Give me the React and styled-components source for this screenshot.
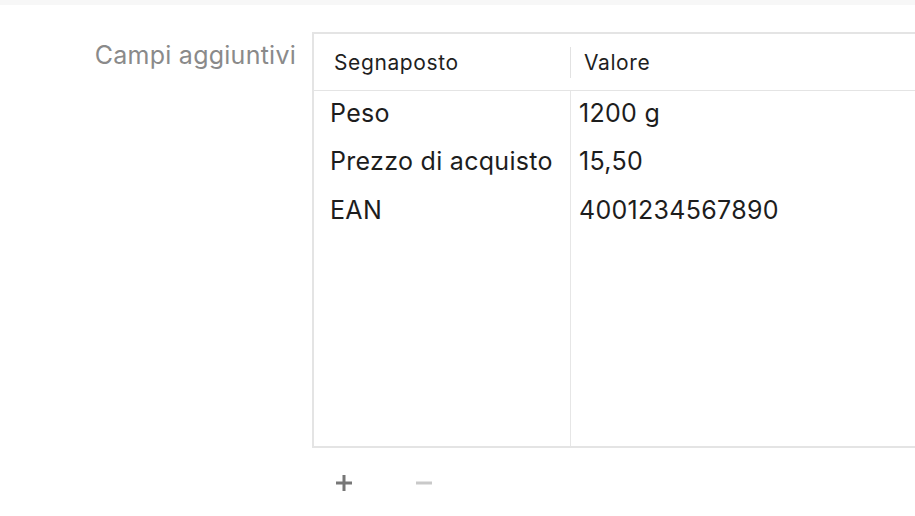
import React from 'react';
import styled, { createGlobalStyle } from 'styled-components';

const GlobalStyle = createGlobalStyle`
  html, body {
    margin: 0;
    padding: 0;
    background: #fff;
    overflow: hidden;
  }
  body {
    font-family: Inter, "Noto Sans", sans-serif;
    -webkit-font-smoothing: antialiased;
  }
`;

const Page = styled.div`
  width: 915px;
  height: 516px;
  overflow: hidden;
`;

const TopBar = styled.div`
  height: 5px;
  background-color: #f7f7f7;
`;

const FormRow = styled.div`
  display: grid;
  grid-template-columns: 312px 640px;
  margin-top: 27px;
`;

const Label = styled.div`
  text-align: right;
  padding-right: 16px;
  padding-top: 8px;
  font-size: 25px;
  line-height: 30px;
  letter-spacing: 0.25px;
  color: #8a8a8a;
`;

const Field = styled.div`
  display: flex;
  flex-direction: column;
`;

const Table = styled.div`
  display: flex;
  flex-direction: column;
  height: 416px;
  border: 2px solid #e4e4e4;
  border-right: none;
  box-sizing: border-box;
`;

const Header = styled.div`
  display: flex;
  align-items: center;
  height: 56px;
  flex-shrink: 0;
  border-bottom: 1px solid #e4e4e4;
`;

const HeaderCell = styled.div`
  box-sizing: border-box;
  width: ${(p) => (p.$first ? '256px' : 'auto')};
  flex: ${(p) => (p.$first ? 'none' : '1')};
  padding-left: ${(p) => (p.$first ? '20px' : '13px')};
  font-size: 21px;
  letter-spacing: 0.6px;
  color: #1f1f1f;
`;

const Separator = styled.div`
  width: 1px;
  height: 31px;
  background-color: #e2e2e2;
`;

const Body = styled.div`
  flex: 1;
  display: flex;
  flex-direction: column;
`;

const Row = styled.div`
  display: flex;
  height: 48.5px;
  flex: ${(p) => (p.$filler ? '1' : 'none')};
`;

const Cell = styled.div`
  box-sizing: border-box;
  display: flex;
  align-items: center;
  padding-bottom: 5px;
  width: ${(p) => (p.$first ? '257px' : 'auto')};
  flex: ${(p) => (p.$first ? 'none' : '1')};
  padding-left: ${(p) => (p.$first ? '16px' : '8px')};
  border-right: ${(p) => (p.$first ? '1px solid #e6e6e6' : 'none')};
  font-size: 25px;
  letter-spacing: 0.3px;
  color: #1d1d1d;
  white-space: nowrap;
`;

const Buttons = styled.div`
  display: flex;
  align-items: center;
  gap: 48px;
  padding: 19px 0 0 16px;
`;

const IconButton = styled.button`
  width: 32px;
  height: 32px;
  padding: 0;
  border: none;
  background: none;
  display: flex;
  align-items: center;
  justify-content: center;
  color: ${(p) => (p.$disabled ? '#c9c9c9' : '#777')};
`;

const rows = [
  { key: 'Peso', value: '1200 g' },
  { key: 'Prezzo di acquisto', value: '15,50' },
  { key: 'EAN', value: '4001234567890' },
];

function PlusIcon() {
  return (
    <svg width="16" height="16" viewBox="0 0 16 16">
      <rect x="6.5" y="0" width="3" height="16" fill="currentColor" />
      <rect x="0" y="6.5" width="16" height="3" fill="currentColor" />
    </svg>
  );
}

function MinusIcon() {
  return (
    <svg width="16" height="16" viewBox="0 0 16 16">
      <rect x="0" y="6.5" width="16" height="3" fill="currentColor" />
    </svg>
  );
}

export default function App() {
  return (
    <Page>
      <GlobalStyle />
      <TopBar />
      <FormRow>
        <Label>Campi aggiuntivi</Label>
        <Field>
          <Table>
            <Header>
              <HeaderCell $first>Segnaposto</HeaderCell>
              <Separator />
              <HeaderCell>Valore</HeaderCell>
            </Header>
            <Body>
              {rows.map((r) => (
                <Row key={r.key}>
                  <Cell $first>{r.key}</Cell>
                  <Cell>{r.value}</Cell>
                </Row>
              ))}
              <Row $filler>
                <Cell $first />
                <Cell />
              </Row>
            </Body>
          </Table>
          <Buttons>
            <IconButton aria-label="Aggiungi">
              <PlusIcon />
            </IconButton>
            <IconButton $disabled aria-label="Rimuovi">
              <MinusIcon />
            </IconButton>
          </Buttons>
        </Field>
      </FormRow>
    </Page>
  );
}
